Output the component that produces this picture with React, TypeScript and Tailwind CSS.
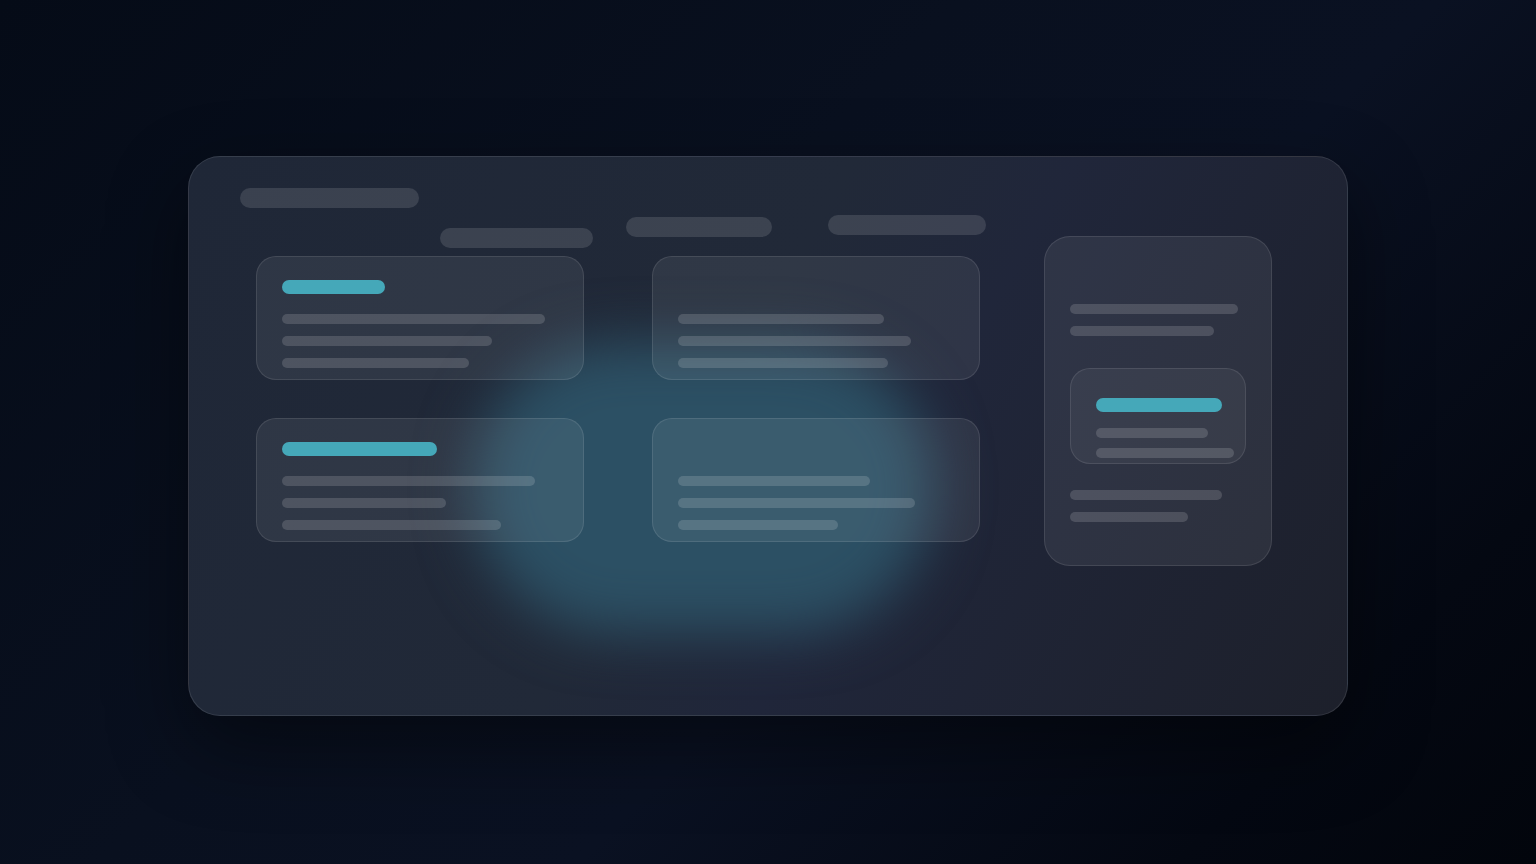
type Bar = { w: number };

type CardProps = {
	accent?: number;
	lines: number[];
};

function Line( { w }: Bar ) {
	return <div className="h-[10px] rounded-full bg-white/[0.15]" style={ { width: w } } />;
}

function SkeletonCard( { accent, lines }: CardProps ) {
	return (
		<div className="h-[124px] rounded-[20px] border border-white/10 bg-white/[0.07] pl-[25px] pt-[23px]">
			{ accent ? (
				<div className="h-[14px] rounded-full bg-[#45a8b9]" style={ { width: accent } } />
			) : (
				<div className="h-[14px]" />
			) }
			<div className="mt-[20px] flex flex-col gap-[12px]">
				{ lines.map( ( w, i ) => (
					<Line key={ i } w={ w } />
				) ) }
			</div>
		</div>
	);
}

export default function App() {
	return (
		<div className="min-h-screen w-full overflow-hidden bg-[linear-gradient(135deg,#050b17_0%,#09101f_40%,#0a1122_60%,#040812_85%,#02050c_100%)] pt-[156px]">
			<div className="relative mx-auto h-[560px] w-[1160px] overflow-hidden rounded-[32px] border border-white/10 bg-[linear-gradient(120deg,#1f2737_0%,#212938_45%,#20263a_60%,#1d202b_100%)] shadow-[0_30px_80px_rgba(0,0,0,0.45)]">
				{/* teal glow behind the cards */}
				<div className="absolute left-[284px] top-[186px] h-[290px] w-[460px] rounded-full bg-[#2c5064] blur-[28px]" />

				<div className="relative flex flex-col pl-[51px] pt-[31px]">
					<div className="h-5 w-[179px] rounded-full bg-white/[0.12]" />

					<div className="mt-[7px] flex items-start">
						<div className="flex w-[746px] flex-col">
							<div className="flex items-start pl-[200px]">
								<div className="mt-[13px] h-5 w-[153px] rounded-full bg-white/[0.12]" />
								<div className="ml-[33px] mt-[2px] h-5 w-[146px] rounded-full bg-white/[0.12]" />
								<div className="ml-[56px] h-5 w-[158px] rounded-full bg-white/[0.12]" />
							</div>

							<div className="ml-[16px] mt-[8px] grid grid-cols-[328px_328px] gap-x-[68px] gap-y-[38px]">
								<SkeletonCard accent={ 103 } lines={ [ 263, 210, 187 ] } />
								<SkeletonCard lines={ [ 206, 233, 210 ] } />
								<SkeletonCard accent={ 155 } lines={ [ 253, 164, 219 ] } />
								<SkeletonCard lines={ [ 192, 237, 160 ] } />
							</div>
						</div>

						<div className="ml-[58px] mt-[21px] h-[330px] w-[228px] rounded-[26px] border border-white/10 bg-white/[0.07] pl-[25px] pt-[67px]">
							<div className="flex flex-col gap-[12px]">
								<Line w={ 168 } />
								<Line w={ 144 } />
							</div>
							<div className="mt-[32px] h-[96px] w-[176px] rounded-[20px] border border-white/10 bg-white/[0.05] pl-[25px] pt-[29px]">
								<div className="h-[14px] w-[126px] rounded-full bg-[#45a8b9]" />
								<div className="mt-[16px] flex flex-col gap-[10px]">
									<Line w={ 112 } />
									<Line w={ 138 } />
								</div>
							</div>
							<div className="mt-[26px] flex flex-col gap-[12px]">
								<Line w={ 152 } />
								<Line w={ 118 } />
							</div>
						</div>
					</div>
				</div>
			</div>
		</div>
	);
}
